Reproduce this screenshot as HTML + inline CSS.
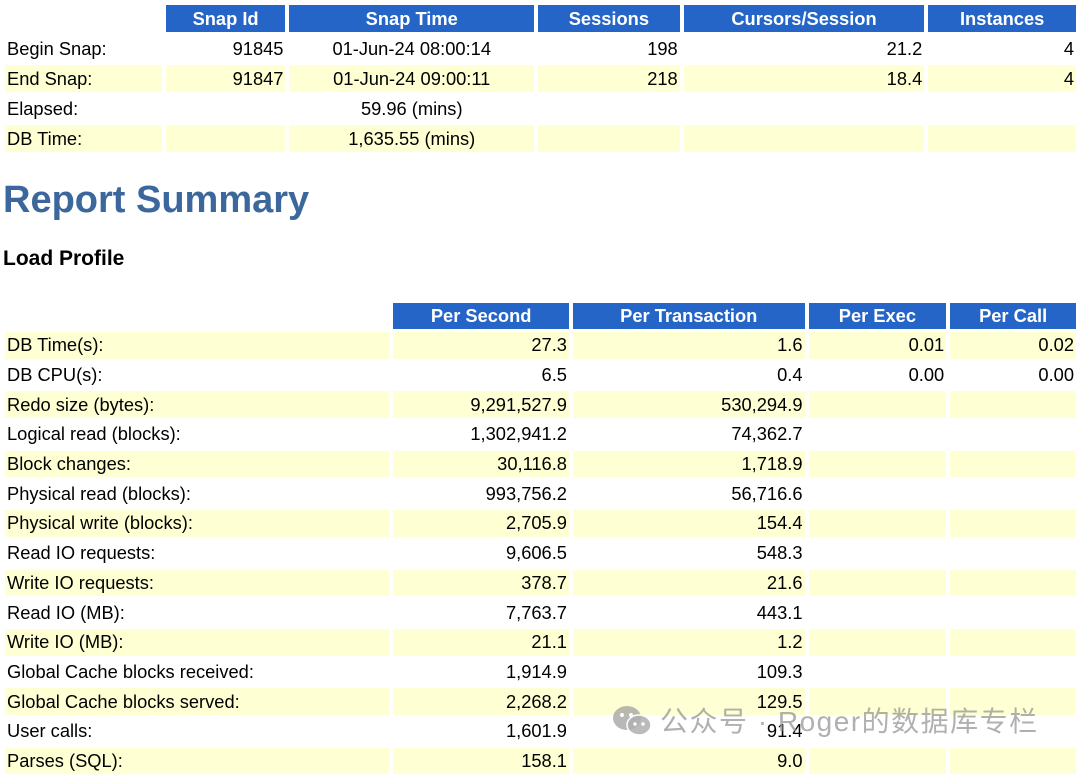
<!DOCTYPE html><html><head><meta charset="utf-8"><style>
body{margin:0;width:1080px;height:763px;overflow:hidden;background:#fff;font-family:"Liberation Sans",Arial,sans-serif;font-size:18.3px;color:#000;position:relative}
table{position:absolute;left:1px;border-collapse:separate;border-spacing:4px 3px;table-layout:fixed}
td,th{padding:0 2px;white-space:nowrap;overflow:hidden}
th{background:#2565c8;color:#fff;font-weight:bold;text-align:center;height:26px;font-size:18.3px}
td{height:27px}
.y td{background:#ffffd4}
.r{text-align:right}.c{text-align:center}
#t2 td{height:26.7px}
h1{position:absolute;left:3px;top:179px;margin:0;font-size:38px;color:#3b679c;font-weight:bold}
h2{position:absolute;left:3px;top:247px;margin:0;font-size:21px;font-weight:bold}
.wm{position:absolute;left:612px;top:700px;color:rgba(150,150,150,.75);font-family:"Liberation Sans","Noto Sans CJK SC",sans-serif;font-size:28px;letter-spacing:1.5px;white-space:nowrap}
</style></head><body>
<table style="top:2px">
<colgroup><col style="width:157px"><col style="width:120px"><col style="width:245px"><col style="width:142px"><col style="width:241px"><col style="width:148px"></colgroup>
<tr><td></td><th>Snap Id</th><th>Snap Time</th><th>Sessions</th><th>Cursors/Session</th><th>Instances</th></tr>
<tr><td>Begin Snap:</td><td class="r">91845</td><td class="c">01-Jun-24 08:00:14</td><td class="r">198</td><td class="r">21.2</td><td class="r">4</td></tr>
<tr class="y"><td>End Snap:</td><td class="r">91847</td><td class="c">01-Jun-24 09:00:11</td><td class="r">218</td><td class="r">18.4</td><td class="r">4</td></tr>
<tr><td>Elapsed:</td><td></td><td class="c">59.96 (mins)</td><td></td><td></td><td></td></tr>
<tr class="y"><td>DB Time:</td><td></td><td class="c">1,635.55 (mins)</td><td></td><td></td><td></td></tr>
</table>
<h1>Report Summary</h1>
<h2>Load Profile</h2>
<table id="t2" style="top:300px">
<colgroup><col style="width:385px"><col style="width:176px"><col style="width:232px"><col style="width:138px"><col style="width:126px"></colgroup>
<tr><td style="height:26px"></td><th>Per Second</th><th>Per Transaction</th><th>Per Exec</th><th>Per Call</th></tr>
<tr class="y"><td>DB Time(s):</td><td class="r">27.3</td><td class="r">1.6</td><td class="r">0.01</td><td class="r">0.02</td></tr>
<tr><td>DB CPU(s):</td><td class="r">6.5</td><td class="r">0.4</td><td class="r">0.00</td><td class="r">0.00</td></tr>
<tr class="y"><td>Redo size (bytes):</td><td class="r">9,291,527.9</td><td class="r">530,294.9</td><td></td><td></td></tr>
<tr><td>Logical read (blocks):</td><td class="r">1,302,941.2</td><td class="r">74,362.7</td><td></td><td></td></tr>
<tr class="y"><td>Block changes:</td><td class="r">30,116.8</td><td class="r">1,718.9</td><td></td><td></td></tr>
<tr><td>Physical read (blocks):</td><td class="r">993,756.2</td><td class="r">56,716.6</td><td></td><td></td></tr>
<tr class="y"><td>Physical write (blocks):</td><td class="r">2,705.9</td><td class="r">154.4</td><td></td><td></td></tr>
<tr><td>Read IO requests:</td><td class="r">9,606.5</td><td class="r">548.3</td><td></td><td></td></tr>
<tr class="y"><td>Write IO requests:</td><td class="r">378.7</td><td class="r">21.6</td><td></td><td></td></tr>
<tr><td>Read IO (MB):</td><td class="r">7,763.7</td><td class="r">443.1</td><td></td><td></td></tr>
<tr class="y"><td>Write IO (MB):</td><td class="r">21.1</td><td class="r">1.2</td><td></td><td></td></tr>
<tr><td>Global Cache blocks received:</td><td class="r">1,914.9</td><td class="r">109.3</td><td></td><td></td></tr>
<tr class="y"><td>Global Cache blocks served:</td><td class="r">2,268.2</td><td class="r">129.5</td><td></td><td></td></tr>
<tr><td>User calls:</td><td class="r">1,601.9</td><td class="r">91.4</td><td></td><td></td></tr>
<tr class="y"><td>Parses (SQL):</td><td class="r">158.1</td><td class="r">9.0</td><td></td><td></td></tr>
</table>
<svg style="position:absolute;left:612px;top:704px" width="42" height="34" viewBox="0 0 42 34"><ellipse cx="15" cy="14" rx="14" ry="12" fill="rgba(160,160,160,.75)"/><ellipse cx="27" cy="21" rx="12" ry="10" fill="rgba(175,175,175,.85)" stroke="#fff" stroke-width="1.5"/><circle cx="10" cy="11" r="2" fill="#fff"/><circle cx="19" cy="11" r="2" fill="#fff"/><circle cx="23" cy="20" r="1.7" fill="#fff"/><circle cx="31" cy="20" r="1.7" fill="#fff"/></svg>
<div class="wm" style="left:660px">公众号 · Roger的数据库专栏</div>
</body></html>
